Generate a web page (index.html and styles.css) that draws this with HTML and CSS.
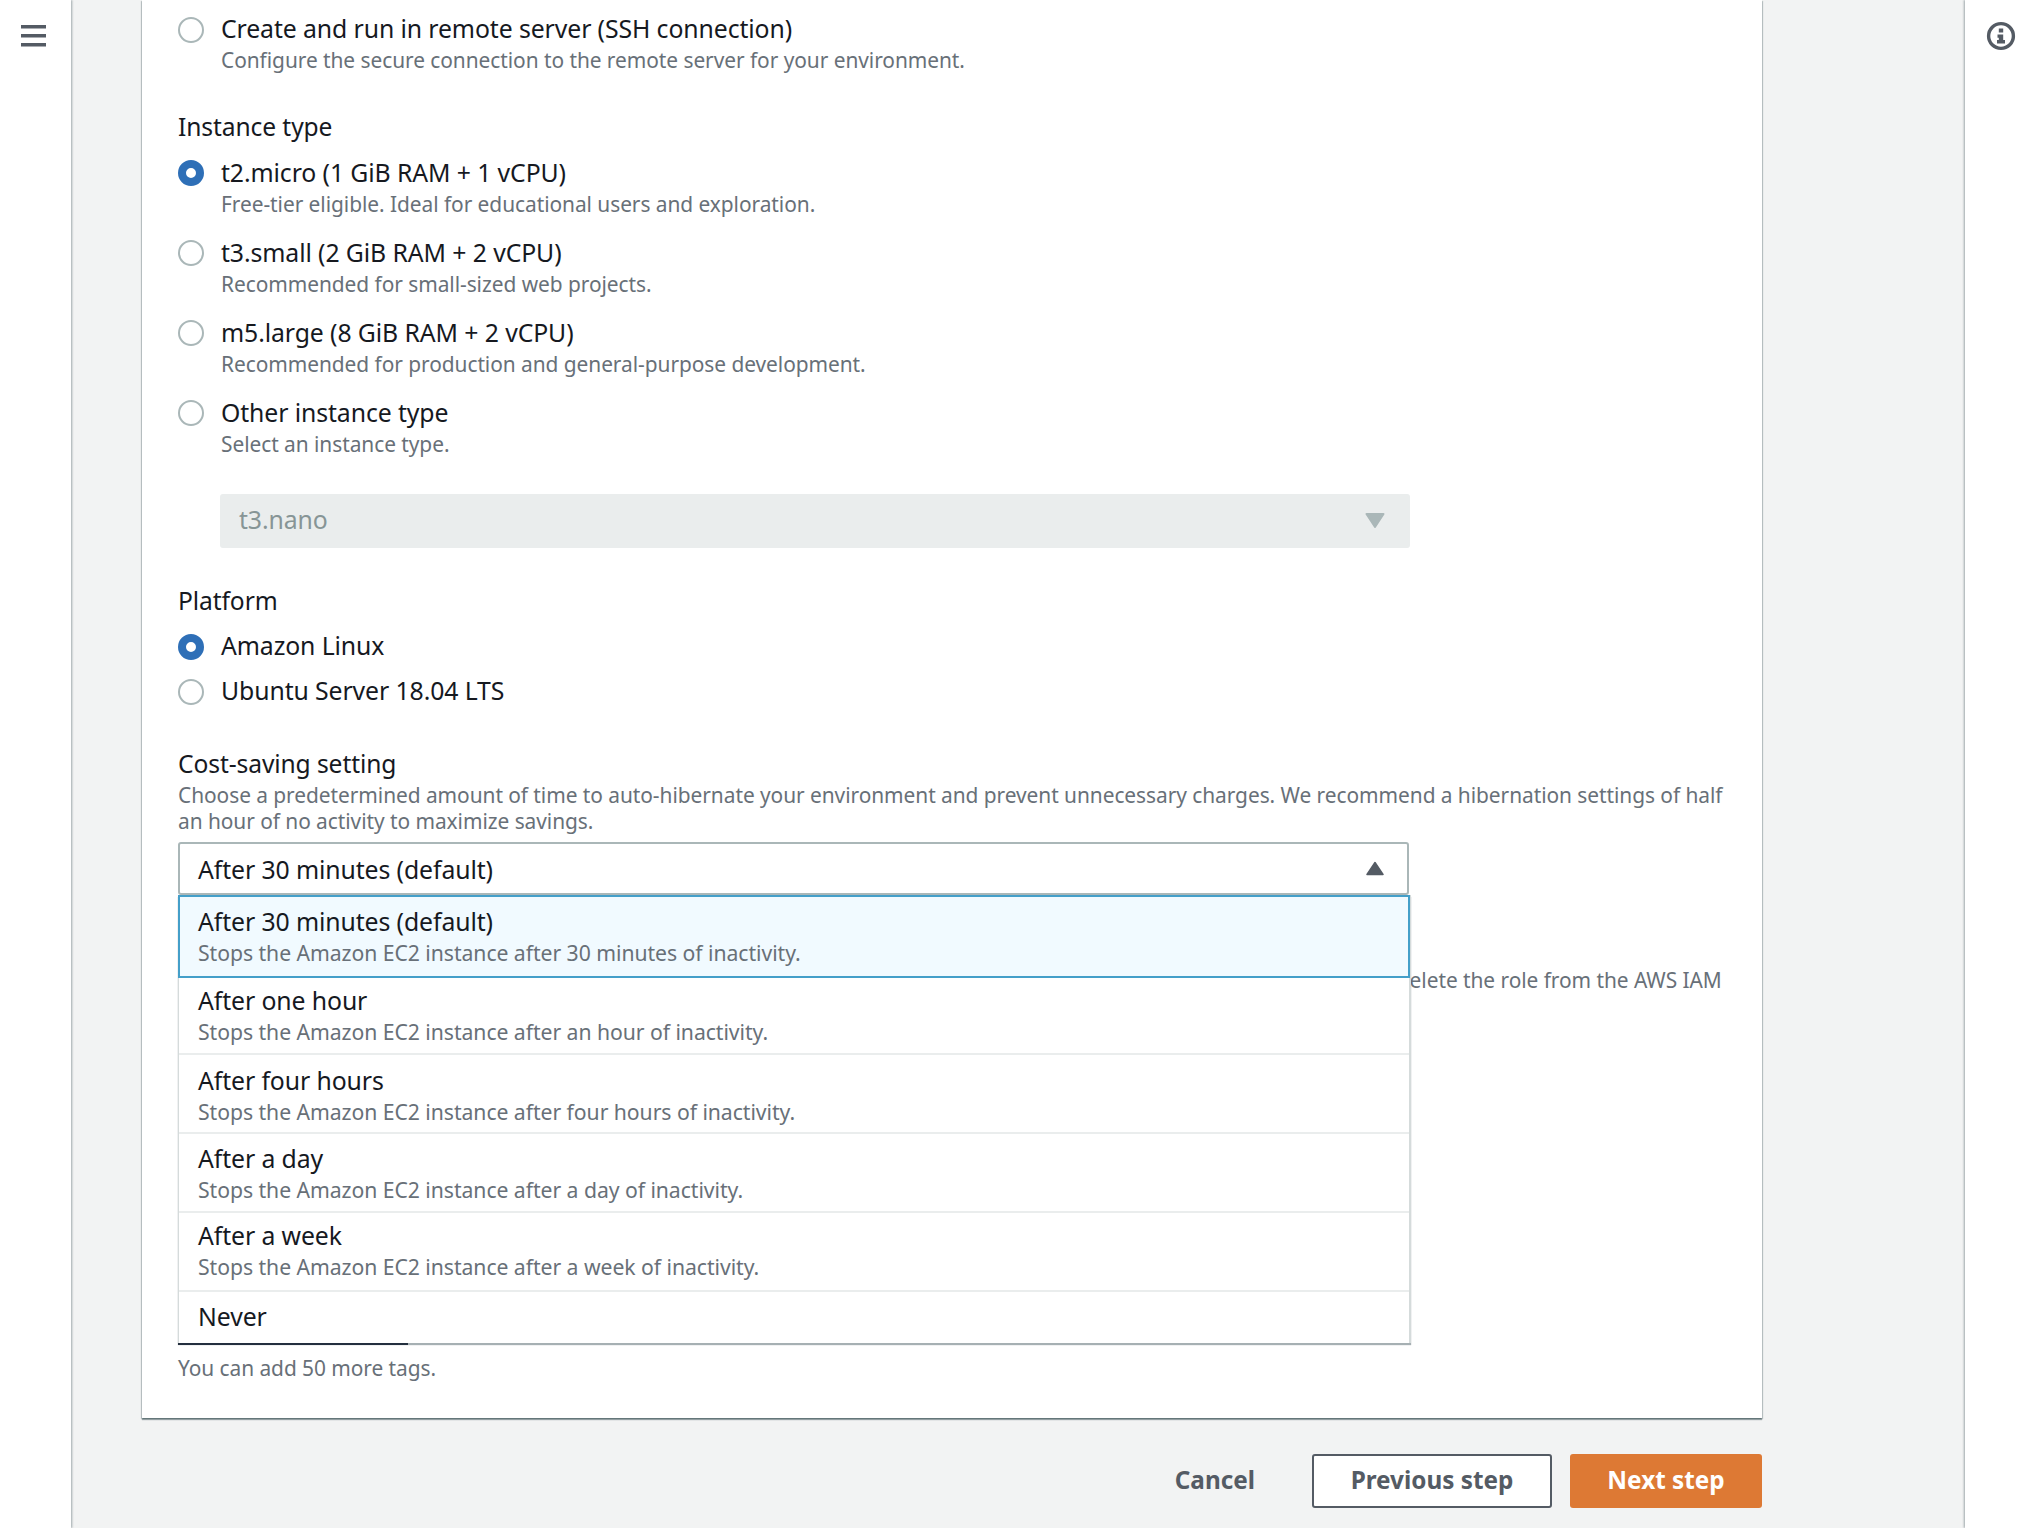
FILE: index.html
```html
<!DOCTYPE html>
<html lang="en">
<head>
<meta charset="utf-8">
<title>Configure settings</title>
<link rel="stylesheet" href="styles.css">
</head>
<body>
<div class="app">
  <nav class="rail rail-left">
    <svg class="menu-icon" width="26" height="22" viewBox="0 0 26 22" aria-hidden="true"><path d="M0 0h25v3.4H0zM0 9h25v3.4H0zM0 18h25v3.4H0z" fill="#545b64"/></svg>
  </nav>
  <main class="main">
    <section class="card">
      <div class="radio-row first-row">
        <span class="radio"></span>
        <div><div class="title">Create and run in remote server (SSH connection)</div><div class="desc">Configure the secure connection to the remote server for your environment.</div></div>
      </div>

      <div class="label label-instance">Instance type</div>
      <div class="radio-list">
        <div class="radio-row"><span class="radio on"></span><div><div class="title">t2.micro (1 GiB RAM + 1 vCPU)</div><div class="desc">Free-tier eligible. Ideal for educational users and exploration.</div></div></div>
        <div class="radio-row"><span class="radio"></span><div><div class="title">t3.small (2 GiB RAM + 2 vCPU)</div><div class="desc">Recommended for small-sized web projects.</div></div></div>
        <div class="radio-row"><span class="radio"></span><div><div class="title">m5.large (8 GiB RAM + 2 vCPU)</div><div class="desc">Recommended for production and general-purpose development.</div></div></div>
        <div class="radio-row"><span class="radio"></span><div><div class="title">Other instance type</div><div class="desc">Select an instance type.</div></div></div>
      </div>
      <div class="select-disabled">
        <span>t3.nano</span>
        <svg width="20" height="15" viewBox="0 0 20 15" aria-hidden="true"><path d="M1.5 1h17L10 14z" fill="#aab7b8" stroke="#aab7b8" stroke-width="2" stroke-linejoin="round"/></svg>
      </div>

      <div class="label label-platform">Platform</div>
      <div class="platform-list">
        <div class="radio-row"><span class="radio on"></span><div class="title">Amazon Linux</div></div>
        <div class="radio-row"><span class="radio"></span><div class="title">Ubuntu Server 18.04 LTS</div></div>
      </div>

      <div class="label label-cost">Cost-saving setting</div>
      <p class="help">Choose a predetermined amount of time to auto-hibernate your environment and prevent unnecessary charges. We recommend a hibernation settings of half an hour of no activity to maximize savings.</p>
      <div class="select-wrap">
        <div class="select-open">
          <span>After 30 minutes (default)</span>
          <svg width="18" height="15" viewBox="0 0 18 15" aria-hidden="true"><path d="M9 1.5L17 13.500H1z" fill="#545b64" stroke="#545b64" stroke-width="1.500" stroke-linejoin="round"/></svg>
        </div>
        <ul class="dropdown">
          <li class="option current"><div class="title">After 30 minutes (default)</div><div class="desc">Stops the Amazon EC2 instance after 30 minutes of inactivity.</div></li>
          <li class="option second"><div class="title">After one hour</div><div class="desc">Stops the Amazon EC2 instance after an hour of inactivity.</div></li>
          <li class="option low"><div class="title">After four hours</div><div class="desc">Stops the Amazon EC2 instance after four hours of inactivity.</div></li>
          <li class="option"><div class="title">After a day</div><div class="desc">Stops the Amazon EC2 instance after a day of inactivity.</div></li>
          <li class="option high"><div class="title">After a week</div><div class="desc">Stops the Amazon EC2 instance after a week of inactivity.</div></li>
          <li class="option last"><div class="title">Never</div></li>
        </ul>
      </div>
      <div class="under-line">AWS Cloud9 creates a service-linked role for you. This allows AWS Cloud9 to call other AWS services on your behalf. You can delete the role from the AWS IAM</div>
      <div class="tags-note">You can add 50 more tags.</div>
    </section>
    <footer class="actions">
      <span class="cancel">Cancel</span>
      <span class="btn btn-secondary">Previous step</span>
      <span class="btn btn-primary">Next step</span>
    </footer>
  </main>
  <aside class="rail rail-right">
    <svg class="info-icon" width="30" height="30" viewBox="0 0 30 30" aria-hidden="true">
      <circle cx="15" cy="15" r="12.400" fill="none" stroke="#545b64" stroke-width="3.400"/>
      <rect x="12.800" y="7.500" width="4.400" height="4" fill="#545b64"/>
      <path d="M11.500 13.500h5.700v5.500h1.800v3.500h-8v-3.500h1.800v-2.300h-1.300z" fill="#545b64"/>
    </svg>
  </aside>
</div>
</body>
</html>
```

FILE: styles.css
```css
* { box-sizing: border-box; }
html, body { margin: 0; padding: 0; height: 100%; }
body {
  font-family: "Noto Sans", "Liberation Sans", sans-serif;
  color: #16191f;
  background: #f2f3f3;
  overflow: hidden;
}
.app {
  display: grid;
  grid-template-columns: 71px minmax(0, 1fr) 65px;
  height: 1528px;
}
.rail { background: #fff; }
.rail-left { box-shadow: 1px 0 2px rgba(0, 28, 36, .35); position: relative; display: flex; justify-content: center; align-items: flex-start; padding-top: 25px; padding-right: 3px; }
.rail-right { box-shadow: -1px 0 2px rgba(0, 28, 36, .35); position: relative; padding: 21px 0 0 21px; }
.menu-icon, .info-icon { display: block; }
.main { padding: 0 203px 0 71px; min-width: 0; }
.card {
  background: #fff;
  height: 1418px;
  padding: 12px 36px 0;
  box-shadow: 0 2px 1px rgba(0, 28, 36, .35), 1px 1px 1px rgba(0, 28, 36, .2), -1px 1px 1px rgba(0, 28, 36, .2);
}
.title { font-size: 24.8px; line-height: 33px; letter-spacing: -.1px; }
.desc { font-size: 20.9px; line-height: 30px; color: #687078; letter-spacing: -.05px; }
.label { font-size: 24.6px; line-height: 32px; letter-spacing: -.1px; }
.radio-row { display: flex; gap: 17px; align-items: flex-start; }
.radio {
  flex: none;
  width: 26px;
  height: 26px;
  margin-top: 4px;
  border-radius: 50%;
  border: 2px solid #aab7b8;
  background: #fff;
}
.first-row .radio { margin-top: 5px; }
.radio.on { border: 8px solid #2e6fb7; }
.label-instance { margin-top: 36px; }
.radio-list { margin-top: 13px; display: flex; flex-direction: column; gap: 17px; }
.select-disabled {
  margin: 34.500px 0 0 42px;
  width: 1190px;
  height: 54px;
  padding: 0 25px 3px 19px;
  display: flex;
  align-items: center;
  justify-content: space-between;
  background: #eaeded;
  border-radius: 3px;
  font-size: 24.8px;
  letter-spacing: -.1px;
}
.select-disabled span { color: #879596; }
.select-disabled svg { margin-top: 3px; }
.label-platform { margin-top: 37.800px; }
.platform-list { margin-top: 12.800px; display: flex; flex-direction: column; gap: 14px; }
.platform-list .title { line-height: 31px; }
.platform-list .radio-row { height: 31px; }
.label-cost { margin-top: 42px; }
.help { margin: 1.500px 0 7.500px; font-size: 20.9px; line-height: 26.500px; color: #687078; letter-spacing: -.05px; }
.select-wrap { position: relative; width: 1231px; }
.select-open {
  height: 53px;
  padding: 0 23px 0 18px;
  display: flex;
  align-items: center;
  justify-content: space-between;
  background: #fff;
  border: 2px solid #aab7b8;
  border-radius: 3px;
  font-size: 24.8px;
  letter-spacing: -.1px;
}
.dropdown {
  position: absolute;
  left: 0;
  right: -1.500px;
  top: 53px;
  margin: 0;
  padding: 0;
  list-style: none;
  background: #fff;
  border-left: 1px solid #d5dbdb;
  border-right: 2px solid #d5dbdb;
  box-shadow: 0 2px 1px rgba(0, 28, 36, .35);
}
.dropdown::after {
  content: "";
  position: absolute;
  left: -1px;
  bottom: -2px;
  width: 230px;
  height: 2px;
  background: #232f3e;
}
.option {
  height: 79px;
  padding: 8px 18px 0 19px;
  border-bottom: 2px solid #eaeded;
}
.option .desc { font-size: 21.2px; }
.option.current {
  height: 83px;
  margin: 0 -1.500px -1px -1px;
  padding-left: 18px;
  padding-top: 8px;
  border: 2px solid #449fc9;
  background: #f1faff;
}
.option.second { height: 78px; padding-top: 6.500px; }
.option.low { padding-top: 9px; }
.option.high { padding-top: 6px; }
.option.last { height: 51px; border-bottom: 0; }
.under-line {
  margin-top: 69px;
  padding-left: 18px;
  white-space: nowrap;
  overflow: hidden;
  font-size: 20.9px;
  line-height: 32px;
  color: #687078;
  letter-spacing: -.05px;
}
.tags-note { margin-top: 356px; font-size: 20.9px; line-height: 32px; color: #687078; letter-spacing: -.05px; }
.actions {
  margin-top: 36px;
  display: flex;
  align-items: center;
  justify-content: flex-end;
}
.cancel { font-size: 24.3px; font-weight: 700; color: #545b64; margin-right: 57px; padding-bottom: 3px; }
.btn {
  height: 54px;
  display: flex;
  align-items: center;
  justify-content: center;
  padding-bottom: 3px;
  font-size: 24.3px;
  font-weight: 700;
  border-radius: 3px;
}
.btn-secondary { width: 240px; margin-right: 18px; background: #fff; border: 2px solid #545b64; color: #545b64; }
.btn-primary { width: 192px; background: #dd7934; color: #fff; }
```
